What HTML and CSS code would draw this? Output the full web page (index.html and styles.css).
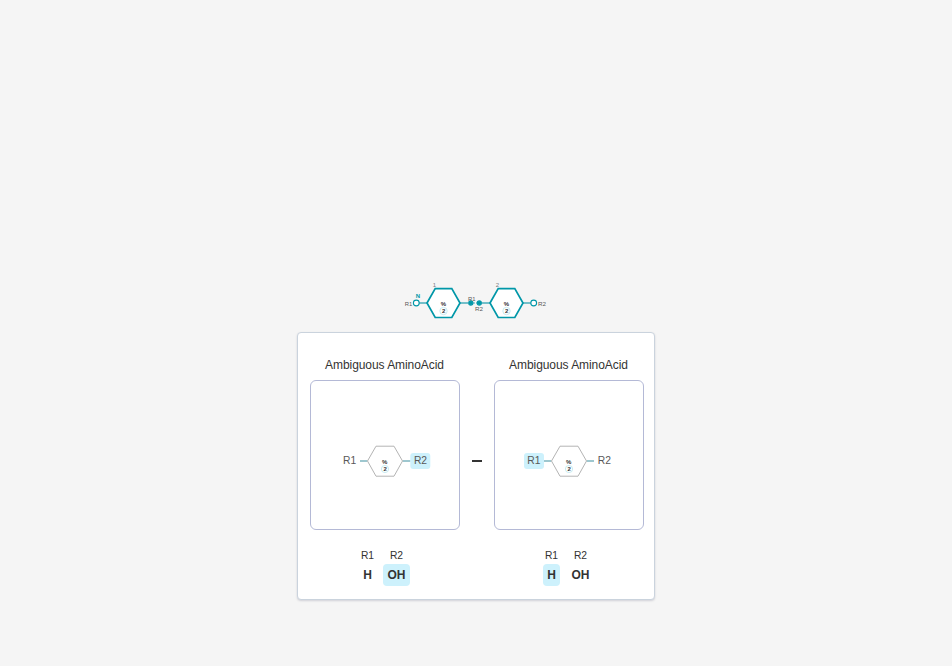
FILE: index.html
```
<!DOCTYPE html>
<html lang="en">
<head>
<meta charset="utf-8">
<title>Connection preview</title>
<link rel="stylesheet" href="styles.css">
</head>
<body>
<main class="canvas">
  <svg class="chain" width="150" height="50" viewBox="400 278 150 50">
    <g class="bond">
      <path d="M419 303H427M460 303H468M482 303H490M523 303H531"/>
      <path class="link" d="M470 303H480"/>
    </g>
    <g class="hex">
      <path d="M427 303L435.2 288.7H451.8L460 303L451.8 317.5H435.2Z"/>
      <path d="M490 303L498.2 288.7H514.8L523 303L514.8 317.5H498.2Z"/>
    </g>
    <g class="port">
      <circle cx="416.3" cy="303" r="2.9"/>
      <circle cx="533.7" cy="303" r="2.9"/>
      <circle class="used" cx="470.8" cy="303" r="2.1"/>
      <circle class="used" cx="479.3" cy="303" r="2.1"/>
    </g>
    <g class="badge"><circle cx="443.5" cy="311" r="3.7"/><circle cx="506.5" cy="311" r="3.7"/></g>
    <g class="symbol">
      <text x="443.3" y="305.7">%</text><text x="506.3" y="305.7">%</text>
      <text x="443.6" y="313.1">2</text><text x="506.6" y="313.1">2</text>
    </g>
    <g class="tiny">
      <text x="408.5" y="306" textLength="7.5" lengthAdjust="spacingAndGlyphs">R1</text>
      <text x="471.7" y="301" textLength="7.5" lengthAdjust="spacingAndGlyphs">R1</text>
      <text x="479" y="311" textLength="8" lengthAdjust="spacingAndGlyphs">R2</text>
      <text x="542" y="306" textLength="8" lengthAdjust="spacingAndGlyphs">R2</text>
      <text class="index" x="434.3" y="287">1</text><text class="index" x="497.3" y="287">2</text>
      <text class="terminal" x="418" y="298">N</text>
    </g>
  </svg>
  <section class="card">
    <article class="monomer">
      <h2 class="name">Ambiguous AminoAcid</h2>
      <div class="frame">
        <svg class="structure" width="148" height="148" viewBox="311 381 148 148">
          <path class="arm" d="M360 461H367.5M402.5 461H410.5"/>
          <path class="outline" d="M367.5 461L376 446.2H394L402.5 461L394 476.2H376Z"/>
          <rect class="selected" x="410.3" y="453" width="20" height="16" rx="3"/>
          <circle class="ring" cx="385" cy="469" r="3.6"/>
          <g class="symbol"><text x="384.7" y="463.8">%</text><text x="385.2" y="471.1">2</text></g>
          <g class="label"><text x="349.7" y="464.3">R1</text><text x="420.5" y="464.3">R2</text></g>
        </svg>
      </div>
      <div class="groups">
        <div class="group"><span>R1</span><b>H</b></div>
        <div class="group"><span>R2</span><b class="active">OH</b></div>
      </div>
    </article>
    <span class="dash"></span>
    <article class="monomer">
      <h2 class="name">Ambiguous AminoAcid</h2>
      <div class="frame">
        <svg class="structure" width="148" height="148" viewBox="495 381 148 148">
          <path class="arm" d="M543.5 461H551.5M586.5 461H594"/>
          <path class="outline" d="M551.5 461L560 446.2H578L586.5 461L578 476.2H560Z"/>
          <rect class="selected" x="524" y="453" width="20" height="16" rx="3"/>
          <circle class="ring" cx="569" cy="469" r="3.6"/>
          <g class="symbol"><text x="568.7" y="463.8">%</text><text x="569.2" y="471.1">2</text></g>
          <g class="label"><text x="533.9" y="464.3">R1</text><text x="604.3" y="464.3">R2</text></g>
        </svg>
      </div>
      <div class="groups">
        <div class="group"><span>R1</span><b class="active">H</b></div>
        <div class="group"><span>R2</span><b>OH</b></div>
      </div>
    </article>
  </section>
</main>
</body>
</html>
```
FILE: styles.css
```
* { box-sizing: border-box; }
body {
  margin: 0;
  background: #f5f5f5;
  color: #333;
  font-family: "Liberation Sans", Arial, sans-serif;
}
.canvas {
  height: 666px;
  padding-top: 278px;
  display: flex;
  flex-direction: column;
  align-items: center;
}
.chain { display: block; flex: none; margin-right: 2px; }
.card {
  width: 358px;
  height: 268px;
  flex: none;
  margin-top: 4px;
  padding: 24px 10px 0 12px;
  display: flex;
  justify-content: space-between;
  background: #fff;
  border: 1px solid #cad3dd;
  border-radius: 4px;
  box-shadow: 0 1px 2px rgba(103, 104, 132, .25);
}
.monomer { width: 150px; }
.name {
  margin: 0 0 7px;
  padding-right: 1px;
  font-size: 12px;
  font-weight: 400;
  line-height: 16px;
  letter-spacing: -0.06px;
  text-align: center;
  white-space: nowrap;
}
.frame {
  height: 150px;
  border: 1px solid #b4b9d6;
  border-radius: 6px;
}
.structure { display: block; }
.groups {
  margin-top: 18px;
  padding-right: 1px;
  display: flex;
  justify-content: center;
  gap: 6px;
}
.group {
  display: flex;
  flex-direction: column;
  align-items: center;
}
.group span { font-size: 10.3px; line-height: 16px; }
.group b {
  min-width: 17px;
  padding: 0 4px;
  font-size: 12px;
  line-height: 22px;
  text-align: center;
  border-radius: 4px;
}
.group:last-child b { min-width: 27px; }
.active { background: #cdf1fc; }
.group:first-child { margin-right: 1px; }
.dash { width: 10px; height: 2px; margin-top: 103px; background: #333; }
text { text-anchor: middle; fill: #333; }
.bond { fill: none; stroke: #48adba; stroke-width: 1.7; }
.link { stroke-dasharray: 2 1; stroke-width: 1; }
.hex { fill: #fff; stroke: #0097a8; stroke-width: 1.7; }
.port { fill: #fff; stroke: #0097a8; stroke-width: 1.1; }
.port .used { fill: #0097a8; }
.badge, .ring { fill: #fff; stroke: #b9e6ed; stroke-width: .8; }
.symbol { font-size: 6px; font-weight: 700; }
.tiny { font-size: 5.5px; }
.tiny text { fill: #585858; }
.tiny .index { fill: #7c7c7f; font-size: 6px; }
.tiny .terminal { fill: #0097a8; font-size: 6px; font-weight: 700; }
.arm { stroke: #7fb5c0; stroke-width: 1.7; }
.outline { fill: #fff; stroke: #b4b4b4; stroke-width: 1; }
.selected { fill: #cdf1fc; }
.label { font-size: 10.3px; }
.label text { fill: #585858; }
```
